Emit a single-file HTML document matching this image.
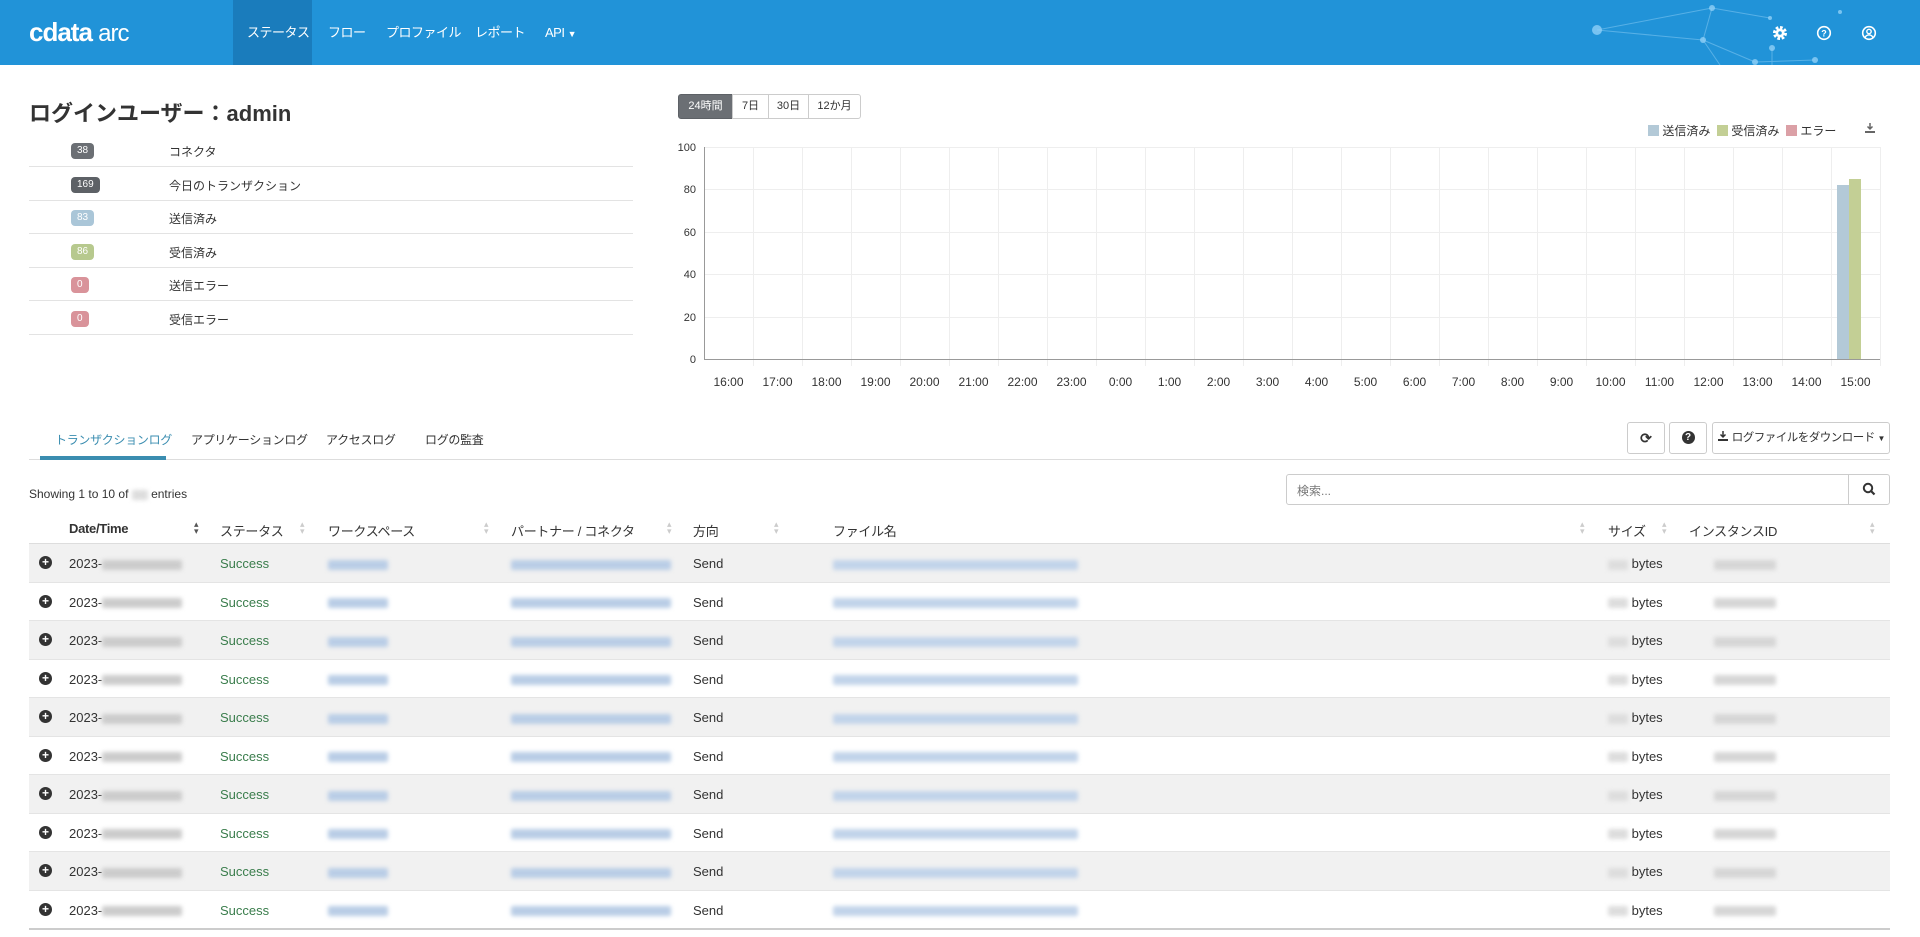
<!DOCTYPE html>
<html><head><meta charset="utf-8">
<style>
*{box-sizing:border-box;margin:0;padding:0}
body{width:1920px;height:937px;overflow:hidden;background:#fff;font-family:"Liberation Sans","Noto Sans CJK JP",sans-serif;color:#333;position:relative;font-size:13px}
.abs{position:absolute;white-space:nowrap}
#hdr{position:absolute;left:0;top:0;width:1920px;height:65px;background:#2193d8}
.nav{position:absolute;top:0;height:65px;line-height:65px;color:#fff;font-size:13px;letter-spacing:-0.5px}
.row{position:absolute;left:29px;width:604px;height:34px;border-bottom:1px solid #e3e3e3}
.badge{position:absolute;left:71px;height:16px;line-height:16px;border-radius:4px;font-size:10px;color:#fff;padding:0 6px}
.lbl{position:absolute;left:169px;font-size:12px;color:#333}
.btn{position:absolute;border:1px solid #ccc;border-radius:3px;background:#fff;font-size:11px;text-align:center;white-space:nowrap}
.blur{display:inline-block;height:10px;border-radius:2px;filter:blur(2px);vertical-align:middle}
.tr{position:absolute;left:29px;width:1861px;height:38.5px;border-bottom:1px solid #e4e4e4;font-size:13px}
.tr.g{background:#f1f1f1}
.tr span.c{position:absolute;top:12px}
.th{position:absolute;top:521px;font-size:13px;color:#333;letter-spacing:-0.3px}
.si{position:absolute;top:521px;font-size:9px;color:#ccc;line-height:7px}
.tab{position:absolute;top:431px;font-size:12px;letter-spacing:-0.3px}
</style></head><body>
<div id="hdr">
<svg class="abs" style="left:1560px;top:0" width="300" height="65">
<g stroke="#7cc4f0" stroke-width="1" opacity=".6" fill="none">
<line x1="37" y1="30" x2="152" y2="8"/><line x1="152" y1="8" x2="210" y2="18"/><line x1="152" y1="8" x2="143" y2="40"/><line x1="37" y1="30" x2="143" y2="40"/><line x1="143" y1="40" x2="195" y2="62"/><line x1="143" y1="40" x2="160" y2="65"/><line x1="212" y1="48" x2="212" y2="65"/><line x1="195" y1="62" x2="255" y2="60"/></g>
<g fill="#8fd0f7" opacity=".8"><circle cx="37" cy="30" r="5"/><circle cx="152" cy="8" r="3"/><circle cx="210" cy="18" r="2"/><circle cx="143" cy="40" r="3"/><circle cx="212" cy="48" r="3"/><circle cx="195" cy="62" r="3"/><circle cx="255" cy="60" r="3"/><circle cx="280" cy="12" r="2"/></g></svg>
<div class="abs" style="left:29px;top:17px;color:#fff;font-size:26px;letter-spacing:-1px"><b>cdata</b> <span style="font-weight:normal;font-size:24px">arc</span></div>
<div class="abs" style="left:233px;top:0;width:79px;height:65px;background:#1a7cbc"></div>
<div class="nav" style="left:247px">ステータス</div>
<div class="nav" style="left:328px">フロー</div>
<div class="nav" style="left:386px">プロファイル</div>
<div class="nav" style="left:475px">レポート</div>
<div class="nav" style="left:545px">API <span style="font-size:9px">▼</span></div>
<svg class="abs" style="left:1772px;top:25px" width="16" height="16" viewBox="0 0 16 16"><circle cx="8" cy="8" r="5.5" fill="none" stroke="#fff" stroke-width="3" stroke-dasharray="2.6 1.7"/><circle cx="8" cy="8" r="4.5" fill="#fff"/><circle cx="8" cy="8" r="1.8" fill="#2193d8"/></svg>
<svg class="abs" style="left:1816px;top:25px" width="16" height="16" viewBox="0 0 16 16"><circle cx="8" cy="8" r="6.3" fill="none" stroke="#fff" stroke-width="1.6"/><text x="8" y="11.5" font-size="9" font-weight="bold" fill="#fff" text-anchor="middle" font-family="Liberation Sans">?</text></svg>
<svg class="abs" style="left:1861px;top:25px" width="16" height="16" viewBox="0 0 16 16"><circle cx="8" cy="8" r="6.3" fill="none" stroke="#fff" stroke-width="1.6"/><circle cx="8" cy="6.5" r="2.2" fill="none" stroke="#fff" stroke-width="1.4"/><path d="M4 12.5c1-2 2.5-2.6 4-2.6s3 .6 4 2.6" fill="none" stroke="#fff" stroke-width="1.4"/></svg>
</div>

<div class="abs" style="left:29px;top:96px;font-size:22px;font-weight:bold;color:#333">ログインユーザー：admin</div>
<div class="row" style="top:133px"></div><div class="badge" style="top:143px;background:#6b6f74">38</div><div class="lbl abs" style="top:143px">コネクタ</div>
<div class="row" style="top:167px"></div><div class="badge" style="top:177px;background:#5d6166">169</div><div class="lbl abs" style="top:177px">今日のトランザクション</div>
<div class="row" style="top:200px"></div><div class="badge" style="top:210px;background:#aac6d8">83</div><div class="lbl abs" style="top:210px">送信済み</div>
<div class="row" style="top:234px"></div><div class="badge" style="top:244px;background:#b7c98e">86</div><div class="lbl abs" style="top:244px">受信済み</div>
<div class="row" style="top:267px"></div><div class="badge" style="top:277px;background:#d9939a">0</div><div class="lbl abs" style="top:277px">送信エラー</div>
<div class="row" style="top:301px"></div><div class="badge" style="top:311px;background:#d9939a">0</div><div class="lbl abs" style="top:311px">受信エラー</div>

<div class="btn" style="left:678px;top:94px;width:55px;height:25px;line-height:23px;background:#6b6f74;color:#fff;border-color:#5d6166;border-radius:3px 0 0 3px">24時間</div>
<div class="btn" style="left:732px;top:94px;width:37px;height:25px;line-height:23px;border-radius:0">7日</div>
<div class="btn" style="left:768px;top:94px;width:41px;height:25px;line-height:23px;border-radius:0">30日</div>
<div class="btn" style="left:808px;top:94px;width:53px;height:25px;line-height:23px;border-radius:0 3px 3px 0">12か月</div>

<div class="abs" style="left:1648px;top:122px;font-size:12px"><span style="display:inline-block;width:11px;height:11px;background:#b3c9d7;vertical-align:-1px"></span> 送信済み&nbsp;&nbsp;<span style="display:inline-block;width:11px;height:11px;background:#c3cf95;vertical-align:-1px"></span> 受信済み&nbsp;&nbsp;<span style="display:inline-block;width:11px;height:11px;background:#dba0a6;vertical-align:-1px"></span> エラー</div>
<svg class="abs" style="left:1864px;top:122px" width="12" height="12" viewBox="0 0 12 12"><path d="M6 1v6M3.5 4.5L6 7l2.5-2.5" stroke="#666" stroke-width="1.5" fill="none"/><rect x="1" y="9" width="10" height="2" fill="#666"/></svg>

<svg class="abs" style="left:670px;top:140px" width="1220" height="255">
<g stroke="#eee" stroke-width="1">
<line x1="34" y1="7.5" x2="1210" y2="7.5"/><line x1="34" y1="49.5" x2="1210" y2="49.5"/><line x1="34" y1="92.5" x2="1210" y2="92.5"/><line x1="34" y1="134.5" x2="1210" y2="134.5"/><line x1="34" y1="177.5" x2="1210" y2="177.5"/>
</g>
<g stroke="#eee" id="vg"></g>
<line x1="34" y1="219.5" x2="1210" y2="219.5" stroke="#999"/>
<g font-size="11" fill="#333" text-anchor="end" font-family="Liberation Sans">
<text x="26" y="11">100</text><text x="26" y="53">80</text><text x="26" y="96">60</text><text x="26" y="138">40</text><text x="26" y="181">20</text><text x="26" y="223">0</text></g>
<rect x="1167" y="45" width="12" height="174" fill="#b3c9d7"/>
<rect x="1179" y="39" width="12" height="180" fill="#c3cf95"/>
<g id="xl" font-size="12" fill="#333" text-anchor="middle" font-family="Liberation Sans"></g>
</svg>
<script>
(function(){var vg=document.getElementById('vg'),xl=document.getElementById('xl'),ns='http://www.w3.org/2000/svg';
var labs=['16:00','17:00','18:00','19:00','20:00','21:00','22:00','23:00','0:00','1:00','2:00','3:00','4:00','5:00','6:00','7:00','8:00','9:00','10:00','11:00','12:00','13:00','14:00','15:00'];
for(var i=0;i<=24;i++){var x=34+i*49+.5;var l=document.createElementNS(ns,'line');l.setAttribute('x1',x);l.setAttribute('x2',x);l.setAttribute('y1',7);l.setAttribute('y2',i==0?219:226);if(i==0)l.setAttribute('stroke','#999');vg.appendChild(l);}
for(var i=0;i<24;i++){var t=document.createElementNS(ns,'text');t.setAttribute('x',34+i*49+24.5);t.setAttribute('y',246);t.textContent=labs[i];xl.appendChild(t);}
})();
</script>

<div class="abs" style="left:29px;top:459px;width:1861px;height:1px;background:#ddd"></div>
<div class="abs" style="left:40px;top:456px;width:126px;height:4px;background:#3a8db0"></div>
<div class="tab abs" style="left:55px;color:#3a8db0">トランザクションログ</div>
<div class="tab abs" style="left:191px">アプリケーションログ</div>
<div class="tab abs" style="left:326px">アクセスログ</div>
<div class="tab abs" style="left:425px">ログの監査</div>

<div class="btn" style="left:1627px;top:422px;width:38px;height:32px;line-height:30px;font-size:14px;font-weight:bold">⟳</div>
<div class="btn" style="left:1669px;top:422px;width:38px;height:32px;padding-top:8px"><span style="display:inline-block;width:13px;height:13px;border-radius:50%;background:#333;color:#fff;font-size:10px;line-height:13px;font-weight:bold">?</span></div>
<div class="btn" style="left:1712px;top:422px;width:178px;height:32px;line-height:30px;font-size:11.5px;letter-spacing:-0.5px"><svg width="12" height="12" viewBox="0 0 12 12" style="vertical-align:-1px"><path d="M6 1v6M3.5 4.5L6 7l2.5-2.5" stroke="#333" stroke-width="1.5" fill="none"/><rect x="1" y="9" width="10" height="2" fill="#333"/></svg> ログファイルをダウンロード <span style="font-size:8px">▼</span></div>

<div class="abs" style="left:29px;top:487px;font-size:12px">Showing 1 to 10 of <span class="blur" style="width:16px;background:#ddd"></span> entries</div>
<div class="abs" style="left:1286px;top:474px;width:604px;height:31px;border:1px solid #ccc;border-radius:3px"></div>
<div class="abs" style="left:1848px;top:474px;width:42px;height:31px;border-left:1px solid #ccc"></div>
<svg class="abs" style="left:1862px;top:482px" width="14" height="14" viewBox="0 0 14 14"><circle cx="6" cy="6" r="4.2" fill="none" stroke="#333" stroke-width="2"/><path d="M9 9l3.5 3.5" stroke="#333" stroke-width="2.2"/></svg>
<div class="abs" style="left:1297px;top:482px;font-size:12px;color:#777">検索...</div>

<div class="th" style="left:69px;font-weight:bold">Date/Time</div><div class="si" style="left:194px;color:#555">▴<br>▾</div>
<div class="th" style="left:220px">ステータス</div><div class="si" style="left:300px">▴<br>▾</div>
<div class="th" style="left:328px">ワークスペース</div><div class="si" style="left:484px">▴<br>▾</div>
<div class="th" style="left:511px">パートナー / コネクタ</div><div class="si" style="left:667px">▴<br>▾</div>
<div class="th" style="left:693px">方向</div><div class="si" style="left:774px">▴<br>▾</div>
<div class="th" style="left:833px">ファイル名</div><div class="si" style="left:1580px">▴<br>▾</div>
<div class="th" style="left:1608px">サイズ</div><div class="si" style="left:1662px">▴<br>▾</div>
<div class="th" style="left:1689px">インスタンスID</div><div class="si" style="left:1870px">▴<br>▾</div>
<div class="abs" style="left:29px;top:543px;width:1861px;height:1px;background:#ddd"></div>
<div id="rows"></div>
<script>
(function(){var h='';for(var i=0;i<10;i++){var top=544+i*38.5;
h+='<div class="tr'+(i%2==0?' g':'')+'" style="top:'+top+'px">'+
'<span class="c" style="left:10px;top:12px;width:13px;height:13px;border-radius:50%;background:#333;color:#fff;font-size:12px;line-height:12px;text-align:center;font-weight:bold">+</span>'+
'<span class="c" style="left:40px">2023-<span class="blur" style="width:80px;background:#ccc"></span></span>'+
'<span class="c" style="left:191px;color:#3a7d4c">Success</span>'+
'<span class="c" style="left:299px"><span class="blur" style="width:60px;background:#b9cde6"></span></span>'+
'<span class="c" style="left:482px"><span class="blur" style="width:160px;background:#b9cde6"></span></span>'+
'<span class="c" style="left:664px">Send</span>'+
'<span class="c" style="left:804px"><span class="blur" style="width:245px;background:#c2d4ea"></span></span>'+
'<span class="c" style="left:1579px"><span class="blur" style="width:20px;background:#ddd"></span> bytes</span>'+
'<span class="c" style="left:1685px"><span class="blur" style="width:62px;background:#d6d6d6"></span></span>'+
'</div>';}
document.getElementById('rows').innerHTML=h;})();
</script>
<div class="abs" style="left:29px;top:928px;width:1861px;height:2px;background:#ccc"></div>
</body></html>
